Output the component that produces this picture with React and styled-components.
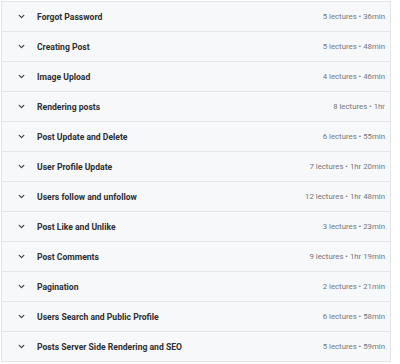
import React from "react";
import styled, { createGlobalStyle } from "styled-components";

const Global = createGlobalStyle`
  html, body { margin: 0; padding: 0; background: #ffffff; }
  body { font-family: Roboto, "Noto Sans", Arial, sans-serif; }
`;

const Page = styled.div`
  padding: 1px 0 0 1px;
`;

const List = styled.div`
  width: 388px;
  border: 1px solid #e3e5e8;
  border-bottom: none;
  display: flex;
  flex-direction: column;
`;

const Row = styled.div`
  height: 29px;
  border-bottom: 1px solid #e3e5e8;
  background: #f7f8fa;
  display: flex;
  align-items: center;
  padding: 0 5px 0 16px;
`;

const Chevron = styled.svg`
  width: 7px;
  height: 7px;
  flex: none;
  margin-right: 12px;
`;

const Title = styled.div`
  flex: 1;
  font-size: 8.6px;
  font-weight: 700;
  color: #2d2f31;
  white-space: nowrap;
`;

const Meta = styled.div`
  font-size: 7.8px;
  color: #73777b;
  white-space: nowrap;
`;

const sections = [
  ["Forgot Password", "5 lectures", "36min"],
  ["Creating Post", "5 lectures", "48min"],
  ["Image Upload", "4 lectures", "46min"],
  ["Rendering posts", "8 lectures", "1hr"],
  ["Post Update and Delete", "6 lectures", "55min"],
  ["User Profile Update", "7 lectures", "1hr 20min"],
  ["Users follow and unfollow", "12 lectures", "1hr 48min"],
  ["Post Like and Unlike", "3 lectures", "23min"],
  ["Post Comments", "9 lectures", "1hr 19min"],
  ["Pagination", "2 lectures", "21min"],
  ["Users Search and Public Profile", "6 lectures", "58min"],
  ["Posts Server Side Rendering and SEO", "5 lectures", "59min"],
];

export default function App() {
  return (
    <Page>
      <Global />
      <List>
        {sections.map(([t, l, d]) => (
          <Row key={t}>
            <Chevron viewBox="0 0 7 7">
              <path d="M1.2 2.4 L3.5 4.6 L5.8 2.4" fill="none" stroke="#3c3f42" strokeWidth="1.2" strokeLinecap="round" strokeLinejoin="round" />
            </Chevron>
            <Title>{t}</Title>
            <Meta>{l} • {d}</Meta>
          </Row>
        ))}
      </List>
    </Page>
  );
}
